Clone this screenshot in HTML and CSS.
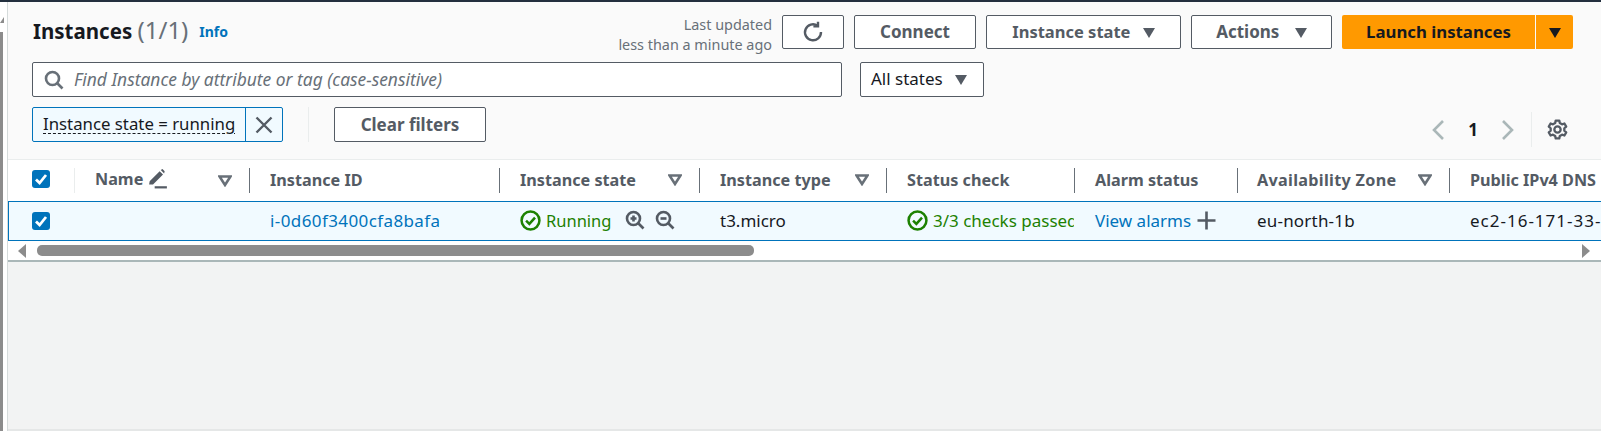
FILE: index.html
```html
<!DOCTYPE html>
<html lang="en">
<head>
    <meta charset="UTF-8">
    <title>Instances</title>
    <link rel="stylesheet" href="styles.css">
</head>
<body>
    <div class="topline"></div>
    <div class="shell">
        <div class="side-scroll">
            <svg class="side-arrow" width="4" height="6" viewBox="0 0 4 6"><path d="M0 6 L4 0 V6 Z" fill="#8c8c8c"/></svg>
            <div class="side-thumb"></div>
        </div>
        <main class="main">
            <section class="head">
                <div class="head-top">
                    <div class="title-wrap">
                        <h1 class="title">Instances <span class="count">(1/1)</span></h1>
                        <a class="info">Info</a>
                    </div>
                    <div class="actions">
                        <div class="updated">Last updated<br>less than a minute ago</div>
                        <button class="btn btn-refresh" aria-label="Refresh">
                            <svg width="22" height="22" viewBox="0 0 22 22" fill="none" stroke="#545b64" stroke-width="2.4"><path d="M15.5 4.6 A8 8 0 1 0 19 11"/><path d="M16 0.8 V5.4 H11.4" stroke-linejoin="miter"/></svg>
                        </button>
                        <button class="btn btn-connect">Connect</button>
                        <button class="btn btn-state">Instance state <span class="caret"></span></button>
                        <button class="btn btn-actions">Actions <span class="caret caret-wide"></span></button>
                        <div class="launch">
                            <button class="launch-main">Launch instances</button>
                            <button class="launch-drop" aria-label="More"><span class="caret caret-dark"></span></button>
                        </div>
                    </div>
                </div>
                <div class="search-row">
                    <div class="search">
                        <svg width="20" height="20" viewBox="0 0 20 20" fill="none" stroke="#687078" stroke-width="2.6"><circle cx="8.5" cy="8.5" r="6.5"/><path d="M13 13 L18.5 18.5"/></svg>
                        <span class="search-hint">Find Instance by attribute or tag (case-sensitive)</span>
                    </div>
                    <button class="select">All states <span class="caret"></span></button>
                </div>
                <div class="filter-row">
                    <div class="token">
                        <span class="token-text">Instance state = running</span>
                        <span class="token-close">
                            <svg width="18" height="18" viewBox="0 0 18 18" stroke="#545b64" stroke-width="2.4"><path d="M1.5 1.5 L16.5 16.5 M16.5 1.5 L1.5 16.5"/></svg>
                        </span>
                    </div>
                    <div class="filter-sep"></div>
                    <button class="btn btn-clear">Clear filters</button>
                    <div class="pager">
                        <svg width="12" height="20" viewBox="0 0 12 20" fill="none" stroke="#aab7b8" stroke-width="2.6"><path d="M11 1 L2 10 L11 19"/></svg>
                        <span class="page-num">1</span>
                        <svg width="12" height="20" viewBox="0 0 12 20" fill="none" stroke="#aab7b8" stroke-width="2.6"><path d="M1 1 L10 10 L1 19"/></svg>
                        <span class="pager-sep"></span>
                        <svg class="gear" width="21" height="21" viewBox="0 0 20 20" fill="none" stroke="#545b64"><circle cx="10" cy="10" r="3" stroke-width="2.2"/><path d="M8.3 1.5 H11.7 L12.2 3.9 L14.3 5.1 L16.6 4.3 L18.3 7.2 L16.5 8.8 V11.2 L18.3 12.8 L16.6 15.7 L14.3 14.9 L12.2 16.1 L11.7 18.5 H8.3 L7.8 16.1 L5.7 14.9 L3.4 15.7 L1.7 12.8 L3.5 11.2 V8.8 L1.7 7.2 L3.4 4.3 L5.7 5.1 L7.8 3.9 Z" stroke-width="2.2" stroke-linejoin="round"/></svg>
                    </div>
                </div>
            </section>

            <section class="table">
                <div class="row row-head">
                    <div class="th th-check"><span class="check"><svg width="18" height="18" viewBox="0 0 18 18" fill="none" stroke="#fff" stroke-width="2.8"><path d="M4 9.5 L7.6 13 L14 5"/></svg></span></div>
                    <div class="th th-name">
                        <span class="name-label">Name
                            <svg width="20" height="20" viewBox="0 0 18 18"><path d="M1 14 L1.5 11 L10.5 2 L13.5 5 L4.5 14 Z M11.5 1 L13 0 L15 2 L14.5 4 Z" fill="#545b64"/><path d="M6 16.5 H17" stroke="#545b64" stroke-width="2"/></svg>
                        </span>
                        <svg class="sort" width="14" height="12" viewBox="0 0 14 12" fill="none" stroke="#687078" stroke-width="2.6"><path d="M1.5 1.5 H12.5 L7 10 Z"/></svg>
                    </div>
                    <div class="th">Instance ID</div>
                    <div class="th">Instance state<svg class="sort" width="14" height="12" viewBox="0 0 14 12" fill="none" stroke="#687078" stroke-width="2.6"><path d="M1.5 1.5 H12.5 L7 10 Z"/></svg></div>
                    <div class="th">Instance type<svg class="sort" width="14" height="12" viewBox="0 0 14 12" fill="none" stroke="#687078" stroke-width="2.6"><path d="M1.5 1.5 H12.5 L7 10 Z"/></svg></div>
                    <div class="th">Status check</div>
                    <div class="th">Alarm status</div>
                    <div class="th th-zone"><span class="zone-label">Availability Zone</span><svg class="sort" width="14" height="12" viewBox="0 0 14 12" fill="none" stroke="#687078" stroke-width="2.6"><path d="M1.5 1.5 H12.5 L7 10 Z"/></svg></div>
                    <div class="th th-last">Public IPv4 DNS</div>
                </div>
                <div class="row row-body">
                    <div class="td td-check"><span class="check"><svg width="18" height="18" viewBox="0 0 18 18" fill="none" stroke="#fff" stroke-width="2.8"><path d="M4 9.5 L7.6 13 L14 5"/></svg></span></div>
                    <div class="td"></div>
                    <div class="td"><a class="link link-id">i-0d60f3400cfa8bafa</a></div>
                    <div class="td td-state">
                        <svg width="21" height="21" viewBox="0 0 20 20" fill="none" stroke="#1d8102" stroke-width="2.4"><circle cx="10" cy="10" r="8.5"/><path d="M5.8 10.2 L8.9 13.2 L14.3 7.2"/></svg>
                        <span class="ok ok-state">Running</span>
                        <svg class="zoom-first" width="20" height="20" viewBox="0 0 20 20" fill="none" stroke="#545b64" stroke-width="2.6"><circle cx="8.5" cy="8.5" r="6.5"/><path d="M13 13 L18.5 18.5"/><path d="M5.5 8.5 H11.5 M8.5 5.5 V11.5"/></svg>
                        <svg class="zoom-second" width="20" height="20" viewBox="0 0 20 20" fill="none" stroke="#545b64" stroke-width="2.6"><circle cx="8.5" cy="8.5" r="6.5"/><path d="M13 13 L18.5 18.5"/><path d="M5.5 8.5 H11.5"/></svg>
                    </div>
                    <div class="td">t3.micro</div>
                    <div class="td td-status">
                        <svg width="21" height="21" viewBox="0 0 20 20" fill="none" stroke="#1d8102" stroke-width="2.4"><circle cx="10" cy="10" r="8.5"/><path d="M5.8 10.2 L8.9 13.2 L14.3 7.2"/></svg>
                        <span class="ok ok-clip">3/3 checks passed</span>
                    </div>
                    <div class="td td-alarm">
                        <a class="link">View alarms</a>
                        <svg width="19" height="19" viewBox="0 0 19 19" stroke="#545b64" stroke-width="2.6"><path d="M0.5 9.5 H18.5 M9.5 0.5 V18.5"/></svg>
                    </div>
                    <div class="td td-zone">eu-north-1b</div>
                    <div class="td td-dns">ec2-16-171-33-2</div>
                </div>
                <div class="hscroll">
                    <svg width="8" height="14" viewBox="0 0 8 14"><path d="M8 0 V14 L0 7 Z" fill="#8c8c8c"/></svg>
                    <div class="hthumb"></div>
                    <svg class="harrow-right" width="8" height="14" viewBox="0 0 8 14"><path d="M0 0 V14 L8 7 Z" fill="#8c8c8c"/></svg>
                </div>
            </section>
            <div class="empty"></div>
        </main>
    </div>
</body>
</html>
```

FILE: styles.css
```css
* {
    box-sizing: border-box;
}

html, body {
    margin: 0;
    height: 431px;
    overflow: hidden;
}

body {
    font-family: "Noto Sans", sans-serif;
    font-size: 17px;
    color: #16191f;
    background: #fff;
}

button {
    font-family: inherit;
    cursor: pointer;
}

.topline {
    height: 2px;
    background: #232f3e;
}

.shell {
    display: flex;
    height: 429px;
}

.side-scroll {
    width: 8px;
    background: #fff;
    border-right: 1px solid #d5dbdb;
    padding-top: 15px;
}

.side-arrow {
    display: block;
}

.side-thumb {
    width: 3px;
    height: 410px;
    margin-top: 9px;
    background: #8c8c8c;
}

.main {
    flex: 1;
    min-width: 0;
    display: flex;
    flex-direction: column;
}

.head {
    height: 157px;
    padding: 13px 28px 0 24px;
    background: #fafafa;
}

.head-top {
    display: flex;
    justify-content: space-between;
    height: 34px;
}

.title-wrap {
    display: flex;
    align-items: center;
    gap: 11px;
    height: 28px;
    padding-left: 1px;
}

.title {
    margin: 0;
    font-size: 20.5px;
    font-weight: 700;
}

.count {
    font-size: 24px;
    font-weight: 400;
    color: #687078;
}

.info {
    font-size: 14px;
    font-weight: 700;
    color: #0073bb;
    margin-top: 4px;
}

.actions {
    display: flex;
    gap: 10px;
    height: 34px;
}

.updated {
    text-align: right;
    font-size: 14.4px;
    line-height: 20px;
    color: #687078;
    white-space: nowrap;
}

.btn {
    height: 34px;
    background: #fff;
    border: 1px solid #545b64;
    border-radius: 2px;
    color: #545b64;
    font-size: 17px;
    font-weight: 700;
    padding: 0 0 2px;
}

.btn-refresh {
    width: 62px;
    display: flex;
    align-items: center;
    justify-content: center;
    padding: 0;
}

.btn-connect { width: 122px; }
.btn-state { width: 195px; font-size: 16.5px; }
.btn-actions { width: 141px; }

.caret {
    display: inline-block;
    width: 0;
    height: 0;
    margin-left: 8px;
    border-left: 6.5px solid transparent;
    border-right: 6.5px solid transparent;
    border-top: 10px solid #545b64;
    vertical-align: 0;
}

.caret-wide {
    margin-left: 11px;
}

.caret-dark {
    margin-left: 0;
    border-top-color: #16191f;
}

.launch {
    display: flex;
    gap: 1px;
}

.launch-main, .launch-drop {
    height: 34px;
    border: 0;
    background: #ff9900;
    color: #16191f;
    font-size: 16.8px;
    font-weight: 700;
    padding: 0 0 2px;
}

.launch-main {
    width: 193px;
    border-radius: 2px 0 0 2px;
}

.launch-drop {
    width: 37px;
    border-radius: 0 2px 2px 0;
}

.search-row {
    display: flex;
    gap: 18px;
    margin-top: 13px;
}

.search {
    width: 810px;
    height: 35px;
    display: flex;
    align-items: center;
    gap: 10px;
    padding-left: 11px;
    background: #fff;
    border: 1px solid #545b64;
    border-radius: 2px;
}

.search-hint {
    font-size: 17.4px;
    font-style: italic;
    color: #687078;
    margin-bottom: 2px;
}

.select {
    width: 124px;
    height: 35px;
    padding: 0 0 2px 10px;
    text-align: left;
    background: #fff;
    border: 1px solid #545b64;
    border-radius: 2px;
    color: #16191f;
    font-size: 17px;
}

.filter-row {
    display: flex;
    align-items: flex-start;
    margin-top: 10px;
}

.token {
    display: flex;
    width: 251px;
    height: 35px;
    background: #f1faff;
    border: 1px solid #0073bb;
    border-radius: 2px;
}

.token-text {
    flex: 1;
    padding-left: 10px;
    font-size: 16.8px;
    line-height: 32px;
    white-space: nowrap;
    text-decoration: underline dashed #16191f 1px;
    text-underline-offset: 3px;
}

.token-close {
    width: 37px;
    display: flex;
    align-items: center;
    justify-content: center;
    border-left: 1px solid #0073bb;
}

.filter-sep {
    width: 1px;
    height: 35px;
    margin-left: 25px;
    background: #eaeded;
}

.btn-clear {
    width: 152px;
    height: 35px;
    margin-left: 25px;
    padding: 0;
}

.pager {
    display: flex;
    align-items: center;
    height: 35px;
    margin-left: auto;
    position: relative;
    top: 5px;
}

.page-num {
    width: 58px;
    text-align: center;
    font-weight: 700;
}

.pager-sep {
    width: 1px;
    height: 35px;
    margin: 0 15px 0 17px;
    background: #eaeded;
}

.gear {
    margin-right: 5px;
}

.table {
    background: #fff;
    border-bottom: 2px solid #aab7b8;
}

.row {
    display: grid;
    grid-template-columns: 67px 175px 250px 200px 187px 188px 163px 212px 151px;
}

.row-head {
    height: 42px;
    border-top: 1px solid #eaeded;
    align-items: center;
}

.row-body {
    grid-template-columns: 66px 175px 250px 200px 187px 188px 163px 212px 151px;
    height: 40px;
    background: #f1faff;
    border-top: 1px solid #0073bb;
    border-bottom: 1px solid #0073bb;
    border-left: 1px solid #0073bb;
    align-items: center;
}

.th {
    display: flex;
    align-items: center;
    justify-content: space-between;
    height: 25px;
    padding: 0 17px 2px 20px;
    border-right: 1px solid #687078;
    color: #545b64;
    font-size: 16.2px;
    font-weight: 700;
    white-space: nowrap;
    overflow: hidden;
}

.th-check {
    padding-left: 24px;
    padding-bottom: 3px;
    border-right-color: #eaeded;
}

.th-name {
    padding-bottom: 0;
}

.th-zone {
    padding-left: 19px;
}

.zone-label {
    letter-spacing: 0.3px;
}

.th-last {
    padding-right: 0;
    border-right: 0;
}

.name-label {
    display: flex;
    align-items: center;
    gap: 5px;
    margin-top: -4px;
}

.td {
    display: flex;
    align-items: center;
    height: 38px;
    padding: 0 0 2px 20px;
    white-space: nowrap;
    overflow: hidden;
    min-width: 0;
}

.td-check {
    padding: 0 0 0 23px;
}

.td-zone {
    padding-left: 19px;
    letter-spacing: 0.2px;
}

.td-dns {
    letter-spacing: 1px;
}

.check {
    display: flex;
    align-items: center;
    justify-content: center;
    width: 18px;
    height: 18px;
    background: #0073bb;
    border-radius: 3px;
}

.link {
    color: #0073bb;
}

.link-id {
    letter-spacing: 0.4px;
}

.ok {
    color: #1d8102;
    margin-left: 5px;
}

.ok-state {
    font-size: 16.5px;
}

.ok-clip {
    overflow: hidden;
}

.td-status {
    padding-right: 1px;
}

.zoom-first {
    margin-left: 14px;
}

.zoom-second {
    margin-left: 10px;
}

.td svg {
    flex: none;
}

.td-alarm {
    gap: 6px;
}

.hscroll {
    display: flex;
    align-items: center;
    height: 19px;
    padding: 0 11px 0 10px;
}

.hthumb {
    width: 717px;
    height: 11px;
    margin-left: 11px;
    background: #8c8c8c;
    border-radius: 5px;
}

.harrow-right {
    margin-left: auto;
}

.empty {
    flex: 1;
    background: #f2f3f3;
    border-bottom: 2px solid #e5e7e7;
}
```
